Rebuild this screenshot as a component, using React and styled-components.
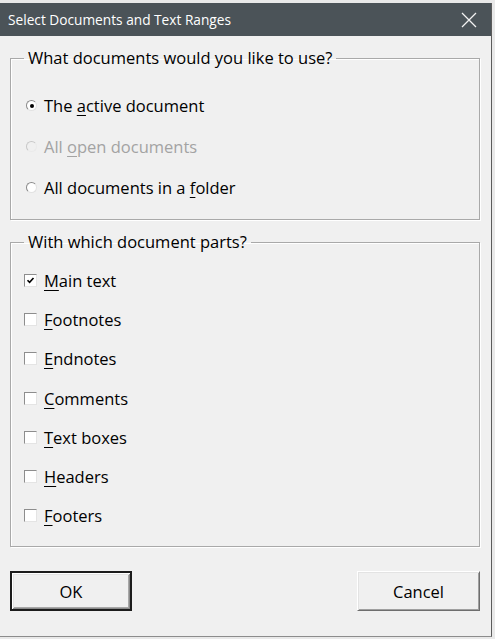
import React from 'react'
import styled, { createGlobalStyle } from 'styled-components'

const GlobalStyle = createGlobalStyle`
  html, body {
    margin: 0;
    padding: 0;
    background: #e9e9e9;
  }
  body {
    font-family: "Open Sans", "Noto Sans", sans-serif;
  }
`

const Window = styled.div`
  margin-top: 3px;
  width: 491px;
  height: 633px;
  border-right: 1px solid #5c5c5c;
  border-bottom: 1px solid #8c8c8c;
  background: #f0f0f0;
  display: flex;
  flex-direction: column;
`

const TitleBar = styled.div`
  height: 33px;
  background: #4b5358;
  display: flex;
  align-items: center;
  justify-content: space-between;
  padding: 0 14px 0 8px;
  color: #ffffff;
  font-size: 13.7px;
`

const Body = styled.div`
  flex: 1;
  padding: 11px 10px 0 10px;
  display: flex;
  flex-direction: column;
  color: #000;
  font-size: 16.5px;
`

const Group = styled.fieldset`
  margin: 0 0 ${p => p.$gap || 0}px 0;
  padding: 0;
  width: 470px;
  box-sizing: border-box;
  border: 1px solid #a9a9a9;
  box-shadow: inset 1px 1px 0 #fff, 1px 1px 0 #fff;
  min-width: 0;
`

const Legend = styled.legend`
  margin-left: 13px;
  padding: 0 4px;
  line-height: 22px;
  font-size: 16.5px;
`

const Items = styled.div`
  display: flex;
  flex-direction: column;
  padding: ${p => p.$top}px 0 ${p => p.$bottom}px ${p => p.$left}px;
`

const Row = styled.label`
  height: ${p => p.$h}px;
  display: flex;
  align-items: center;
  gap: 7px;
  color: ${p => (p.$disabled ? '#a3a3a3' : '#000')};
`

const Radio = styled.span`
  width: 11px;
  height: 11px;
  border-radius: 50%;
  box-sizing: border-box;
  border: 1px solid;
  border-color: ${p => (p.$disabled ? '#c8c8c8 #eaeaea #eaeaea #c8c8c8' : '#8a8a8a #e2e2e2 #e2e2e2 #8a8a8a')};
  background: ${p => (p.$disabled ? '#f0f0f0' : '#fff')};
  display: flex;
  align-items: center;
  justify-content: center;
  &::after {
    content: '';
    width: 4px;
    height: 4px;
    border-radius: 50%;
    background: #000;
    display: ${p => (p.$checked ? 'block' : 'none')};
  }
`

const Check = styled.span`
  width: 13px;
  height: 13px;
  box-sizing: border-box;
  border: 1px solid;
  border-color: #8d8d8d #e4e4e4 #e4e4e4 #8d8d8d;
  background: #fff;
  display: flex;
  align-items: center;
  justify-content: center;
`

const Buttons = styled.div`
  margin-top: 24px;
  display: flex;
  justify-content: space-between;
  width: 470px;
`

const Button = styled.button`
  width: ${p => p.$w}px;
  height: 40px;
  box-sizing: border-box;
  font-family: inherit;
  font-size: 16.5px;
  color: #000;
  background: #f0f0f0;
  padding: 0;
  border: ${p => (p.$default ? '2px solid #1c1c1c' : '1px solid')};
  border-color: ${p => (p.$default ? '#1c1c1c' : '#ffffff #6e6e6e #6e6e6e #ffffff')};
  box-shadow: ${p =>
    p.$default
      ? 'inset 1px 1px 0 #fff, inset -1px -1px 0 #8a8a8a, inset 2px 2px 0 #e4e4e4, inset -2px -2px 0 #a8a8a8'
      : 'inset 1px 1px 0 #e3e3e3, inset -1px -1px 0 #a0a0a0'};
`

const U = styled.span`
  text-decoration: underline;
  text-underline-offset: 3px;
`

function CloseIcon() {
  return (
    <svg width="16" height="16" viewBox="0 0 16 16">
      <path d="M1 1 L15 15 M15 1 L1 15" stroke="#f2f2f2" strokeWidth="1.3" fill="none" />
    </svg>
  )
}

function CheckMark() {
  return (
    <svg width="9" height="9" viewBox="0 0 9 9">
      <path d="M1.5 4.2 L3.6 6.4 L7.5 2" stroke="#000" strokeWidth="1.6" fill="none" />
    </svg>
  )
}

const parts = [
  ['M', 'ain text', true],
  ['F', 'ootnotes'],
  ['E', 'ndnotes'],
  ['C', 'omments'],
  ['T', 'ext boxes'],
  ['H', 'eaders'],
  ['F', 'ooters'],
]

export default function App() {
  return (
    <>
      <GlobalStyle />
      <Window>
        <TitleBar>
          <span>Select Documents and Text Ranges</span>
          <CloseIcon />
        </TitleBar>
        <Body>
          <Group $gap={11}>
            <Legend>What documents would you like to use?</Legend>
            <Items $top={16} $bottom={11} $left={15}>
              <Row $h={41}>
                <Radio $checked />
                <span>The <U>a</U>ctive document</span>
              </Row>
              <Row $h={41} $disabled>
                <Radio $disabled />
                <span>All <U>o</U>pen documents</span>
              </Row>
              <Row $h={41}>
                <Radio />
                <span>All documents in a <U>f</U>older</span>
              </Row>
            </Items>
          </Group>
          <Group>
            <Legend>With which document parts?</Legend>
            <Items $top={8} $bottom={11} $left={13}>
              {parts.map(([k, rest, on], i) => (
                <Row key={i} $h={39.2}>
                  <Check>{on && <CheckMark />}</Check>
                  <span><U>{k}</U>{rest}</span>
                </Row>
              ))}
            </Items>
          </Group>
          <Buttons>
            <Button $default $w={122}>OK</Button>
            <Button $w={123}>Cancel</Button>
          </Buttons>
        </Body>
      </Window>
    </>
  )
}
